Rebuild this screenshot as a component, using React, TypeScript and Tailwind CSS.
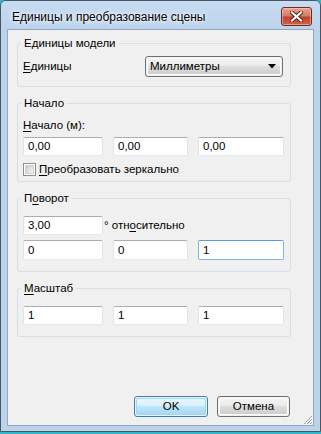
import React from "react";

const F = "font-['Liberation_Sans',Arial,sans-serif]";

function Field({ value, w, h = "h-[20px]", focused = false }: { value: string; w: string; h?: string; focused?: boolean }) {
  return (
    <div
      className={`${w} ${h} flex items-center pl-[4px] bg-white text-[11.5px] leading-[15px] text-black rounded-[2px] border ${
        focused
          ? "border-[#7eb4ea] border-t-[#569de5]"
          : "border-[#e2e3ea] border-t-[#abadb3] border-b-[#e3e9ef]"
      }`}
    >
      {value}
    </div>
  );
}

function Group({ title, children, className = "" }: { title: React.ReactNode; children: React.ReactNode; className?: string }) {
  return (
    <fieldset className={`ml-[9px] w-[274px] border border-[#d5dfe5] rounded-[3px] pl-[5px] ${className}`}>
      <legend className="-ml-[2px] px-[3px] h-[14px] leading-[14px] text-[11.5px] text-black">{title}</legend>
      {children}
    </fieldset>
  );
}

function Btn({ label, w, def = false }: { label: string; w: string; def?: boolean }) {
  return (
    <div
      className={`${w} h-[21px] rounded-[3px] border ${
        def ? "border-[#3c7fb1]" : "border-[#707070]"
      } p-[1px]`}
    >
      <div
        className={`w-full h-full rounded-[2px] flex items-center justify-center text-[11.5px] text-black ${
          def
            ? "bg-[linear-gradient(#eaf6fd_0%,#d9f0fc_45%,#bee6fd_50%,#a7d9f5_100%)] border border-[#9fd8f7]"
            : "bg-[linear-gradient(#f2f2f2_0%,#ebebeb_45%,#dddddd_50%,#cfcfcf_100%)] border border-[#fcfcfc]"
        }`}
      >
        {label}
      </div>
    </div>
  );
}

function U({ children }: { children: React.ReactNode }) {
  return <span className="underline underline-offset-[2px] decoration-1">{children}</span>;
}

export default function App() {
  return (
    <div className={`w-[321px] h-[434px] bg-[#2fb8c8] ${F}`}>
      <div className="w-[321px] h-[432px] bg-[#bcd3ec] border border-[#4a5564] rounded-t-[6px] flex flex-col">
        {/* Title bar */}
        <div className="h-[28px] flex items-start justify-between pl-[11px] pr-[8px] bg-[linear-gradient(#c7dcf2,#bcd3ec)] rounded-t-[5px]">
          <div className="pt-[9px] text-[12px] leading-[15px] text-black [text-shadow:0_0_6px_#ffffff,0_0_3px_#ffffff]">
            Единицы и преобразование сцены
          </div>
          <div className="mt-[6px] w-[31px] h-[19px] rounded-[3px] border border-[#6e2a23] bg-[linear-gradient(#e8a595_0%,#d47a68_45%,#c2432e_55%,#d0644c_100%)] flex items-center justify-center shadow-[inset_0_0_0_1px_rgba(255,210,200,0.5)]">
            <svg width="13" height="11" viewBox="0 0 13 11">
              <path d="M2 1.5 L11 9.5 M11 1.5 L2 9.5" stroke="#5a1a12" strokeWidth="4" strokeLinecap="square" />
              <path d="M2 1.5 L11 9.5 M11 1.5 L2 9.5" stroke="#ffffff" strokeWidth="2.2" strokeLinecap="square" />
            </svg>
          </div>
        </div>
        {/* Client */}
        <div className="relative mx-[6px] mb-[5px] h-[397px] border border-[#8fa7c2] bg-[#f0f0f0] flex flex-col pt-[6px]">
          <Group title="Единицы модели">
            <div className="pt-[6px] pb-[9px] flex items-center h-[21px] box-content">
              <div className="w-[122px] text-[11.5px] leading-[15px] text-black"><U>Е</U>диницы</div>
              <div className="w-[138px] h-[21px] rounded-[3px] border border-[#707070] p-[1px]">
                <div className="w-full h-full rounded-[2px] border border-[#fcfcfc] bg-[linear-gradient(#f2f2f2_0%,#ebebeb_45%,#dddddd_50%,#cfcfcf_100%)] flex items-center justify-between pl-[2px] pr-[4px] text-[11.5px] text-black">
                  <span>Миллиметры</span>
                  <svg width="8" height="5" viewBox="0 0 8 5"><path d="M0 0 H8 L4 4.5 Z" fill="#000" /></svg>
                </div>
              </div>
            </div>
          </Group>

          <Group title="Начало" className="mt-[9px]">
            <div className="pt-[8px] pb-[4px] flex flex-col">
              <div className="h-[16px] text-[11.5px] leading-[15px] text-black"><U>Н</U>ачало (м):</div>
              <div className="mt-[3px] flex gap-[9px]">
                <Field value="0,00" w="w-[80px]" h="h-[19px]" />
                <div className="ml-[1px]"><Field value="0,00" w="w-[75px]" h="h-[19px]" /></div>
                <div className="ml-[1px]"><Field value="0,00" w="w-[86px]" h="h-[19px]" /></div>
              </div>
              <div className="mt-[6px] h-[15px] flex items-center gap-[3px]">
                <div className="w-[13px] h-[13px] border border-[#8e8f8f] p-[1px] bg-white">
                  <div className="w-full h-full bg-[linear-gradient(135deg,#cbcbcb,#f6f6f6)] border border-[#d0d0d0]" />
                </div>
                <span className="text-[11.5px] leading-[15px] text-black"><U>П</U>реобразовать зеркально</span>
              </div>
            </div>
          </Group>

          <Group title={<span>П<U>о</U>ворот</span>} className="mt-[9px]">
            <div className="pt-[11px] pb-[11px] flex flex-col">
              <div className="flex items-start">
                <Field value="3,00" w="w-[80px]" h="h-[19px]" />
                <div className="ml-[1px] pt-[2px] text-[11.5px] leading-[15px] text-black">
                  ° отн<U>о</U>сительно
                </div>
              </div>
              <div className="mt-[5px] flex gap-[9px]">
                <Field value="0" w="w-[80px]" />
                <div className="ml-[1px]"><Field value="0" w="w-[75px]" /></div>
                <div className="ml-[1px]"><Field value="1" w="w-[86px]" focused /></div>
              </div>
            </div>
          </Group>

          <Group title={<span><U>М</U>асштаб</span>} className="mt-[9px]">
            <div className="pt-[11px] pb-[11px] flex gap-[9px]">
              <Field value="1" w="w-[80px]" h="h-[19px]" />
              <div className="ml-[1px]"><Field value="1" w="w-[75px]" h="h-[19px]" /></div>
              <div className="ml-[1px]"><Field value="1" w="w-[86px]" h="h-[19px]" /></div>
            </div>
          </Group>

          <div className="mt-auto mb-[8px] pr-[23px] flex justify-end gap-[9px]">
            <Btn label="OK" w="w-[74px]" def />
            <Btn label="Отмена" w="w-[73px]" />
          </div>

          <svg className="absolute right-0 bottom-0" width="11" height="11" viewBox="0 0 11 11">
            <path d="M10 2 L2 10 M10 5 L5 10 M10 8 L8 10" stroke="#a0a0a0" strokeWidth="1" />
            <path d="M11 3 L3 11 M11 6 L6 11 M11 9 L9 11" stroke="#ffffff" strokeWidth="1" />
          </svg>
        </div>
      </div>
    </div>
  );
}
